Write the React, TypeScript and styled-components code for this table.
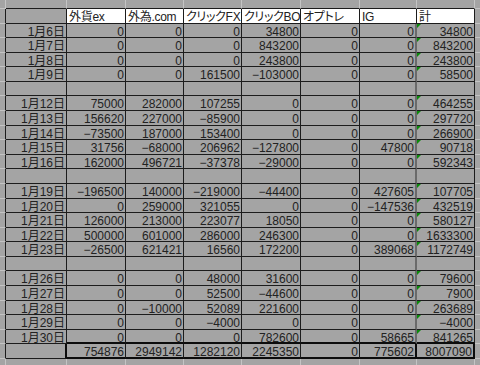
import React from 'react';
import styled, { createGlobalStyle } from 'styled-components';

type Line = 'none' | 'light' | 'dark' | 'soft' | 'thick';
type RowKind = 'header' | 'data' | 'blank' | 'total';
type Value = number | string;
type Row = { kind: RowKind; label: string; values: Value[] };

const lineCss = (l: Line) => {
  switch (l) {
    case 'light': return '1px solid #c4c4c4';
    case 'dark': return '1px solid #1c1c1c';
    case 'soft': return '2px solid #6a6a6a';
    case 'thick': return '2px solid #0c0c0c';
    default: return 'none';
  }
};

const heads = ['外貨ex', '外為.com', 'クリックFX', 'クリックBO', 'オプトレ', 'IG', '計'];

const d = (label: string, ...values: Value[]): Row => ({ kind: 'data', label, values });
const blank: Row = { kind: 'blank', label: '', values: ['', '', '', '', '', '', ''] };

const rows: Row[] = [
  { kind: 'header', label: '', values: heads },
  d('1月6日', 0, 0, 0, 34800, 0, 0, 34800),
  d('1月7日', 0, 0, 0, 843200, 0, 0, 843200),
  d('1月8日', 0, 0, 0, 243800, 0, 0, 243800),
  d('1月9日', 0, 0, 161500, -103000, 0, 0, 58500),
  blank,
  d('1月12日', 75000, 282000, 107255, 0, 0, 0, 464255),
  d('1月13日', 156620, 227000, -85900, 0, 0, 0, 297720),
  d('1月14日', -73500, 187000, 153400, 0, 0, 0, 266900),
  d('1月15日', 31756, -68000, 206962, -127800, 0, 47800, 90718),
  d('1月16日', 162000, 496721, -37378, -29000, 0, 0, 592343),
  blank,
  d('1月19日', -196500, 140000, -219000, -44400, 0, 427605, 107705),
  d('1月20日', 0, 259000, 321055, 0, 0, -147536, 432519),
  d('1月21日', 126000, 213000, 223077, 18050, 0, 0, 580127),
  d('1月22日', 500000, 601000, 286000, 246300, 0, 0, 1633300),
  d('1月23日', -26500, 621421, 16560, 172200, 0, 389068, 1172749),
  blank,
  d('1月26日', 0, 0, 48000, 31600, 0, 0, 79600),
  d('1月27日', 0, 0, 52500, -44600, 0, 0, 7900),
  d('1月28日', 0, -10000, 52089, 221600, 0, 0, 263689),
  d('1月29日', 0, 0, -4000, 0, 0, '', -4000),
  d('1月30日', 0, 0, 0, 782600, 0, 58665, 841265),
  { kind: 'total', label: '', values: [754876, 2949142, 1282120, 2245350, 0, 775602, 8007090] },
];

const fmt = (v: Value) => (typeof v === 'number' ? String(v).replace('-', '−') : v);

const GlobalStyle = createGlobalStyle`
  html, body {
    margin: 0;
    padding: 0;
    background: #a4a4a4;
  }
`;

const Sheet = styled.div`
  display: grid;
  grid-template-columns: 6px 61px 59px 58px 58px 59px 59px 57px 58px 1fr;
  grid-template-rows: 9px repeat(24, 14.58px) 1fr;
  width: 480px;
  height: 365px;
  overflow: hidden;
  background: #a4a4a4;
  font-family: "Liberation Sans", "Noto Sans CJK JP", sans-serif;
  font-size: 12px;
  color: #222222;
`;

const Edge = styled.div<{ $right: Line; $bottom: Line }>`
  box-sizing: border-box;
  border-right: ${(p) => lineCss(p.$right)};
  border-bottom: ${(p) => lineCss(p.$bottom)};
`;

const Cell = styled.div<{
  $right: Line;
  $bottom: Line;
  $head?: boolean;
  $white?: boolean;
  $flag?: boolean;
}>`
  position: relative;
  box-sizing: border-box;
  min-width: 0;
  overflow: hidden;
  white-space: nowrap;
  line-height: 13px;
  padding: ${(p) => (p.$head ? '2px 0 0 2px' : '2px 1px 0 0')};
  text-align: ${(p) => (p.$head ? 'left' : 'right')};
  font-feature-settings: ${(p) => (p.$head ? '"palt"' : 'normal')};
  letter-spacing: ${(p) => (p.$head ? '-0.3px' : '0')};
  background: ${(p) => (p.$white ? '#ffffff' : '#a4a4a4')};
  border-right: ${(p) => lineCss(p.$right)};
  border-bottom: ${(p) => lineCss(p.$bottom)};

  &::before {
    content: '';
    display: ${(p) => (p.$flag ? 'block' : 'none')};
    position: absolute;
    top: 0;
    left: 0;
    width: 0;
    height: 0;
    border-top: 4px solid #0a8a0a;
    border-right: 4px solid transparent;
  }
`;

const rightLine = (kind: RowKind, c: number): Line => {
  if (kind === 'total') return c === 1 || c >= 7 ? 'thick' : 'dark';
  if (kind === 'header') return 'dark';
  return c === 7 ? 'soft' : 'dark';
};

const bottomLine = (kind: RowKind, c: number, beforeTotal: boolean): Line => {
  if ((kind === 'total' || beforeTotal) && c >= 2) return 'thick';
  return 'dark';
};

export default function App() {
  const cells: React.ReactNode[] = [];

  for (let c = 0; c < 10; c++) {
    cells.push(
      <Edge key={`t${c}`} $right={c < 9 ? 'light' : 'none'} $bottom={c >= 1 && c <= 8 ? 'dark' : 'light'} />
    );
  }

  rows.forEach((row, r) => {
    const beforeTotal = rows[r + 1]?.kind === 'total';
    cells.push(<Edge key={`l${r}`} $right="dark" $bottom="light" />);
    [row.label, ...row.values.map(fmt)].forEach((text, i) => {
      const c = i + 1;
      const header = row.kind === 'header';
      cells.push(
        <Cell
          key={`c${r}-${c}`}
          $right={rightLine(row.kind, c)}
          $bottom={bottomLine(row.kind, c, beforeTotal)}
          $head={header}
          $white={header && c >= 2}
          $flag={row.kind === 'data' && c === 8}
        >
          {text}
        </Cell>
      );
    });
    cells.push(<Edge key={`r${r}`} $right="none" $bottom="light" />);
  });

  for (let c = 0; c < 10; c++) {
    cells.push(<Edge key={`b${c}`} $right={c < 9 ? 'light' : 'none'} $bottom="none" />);
  }

  return (
    <>
      <GlobalStyle />
      <Sheet>{cells}</Sheet>
    </>
  );
}
